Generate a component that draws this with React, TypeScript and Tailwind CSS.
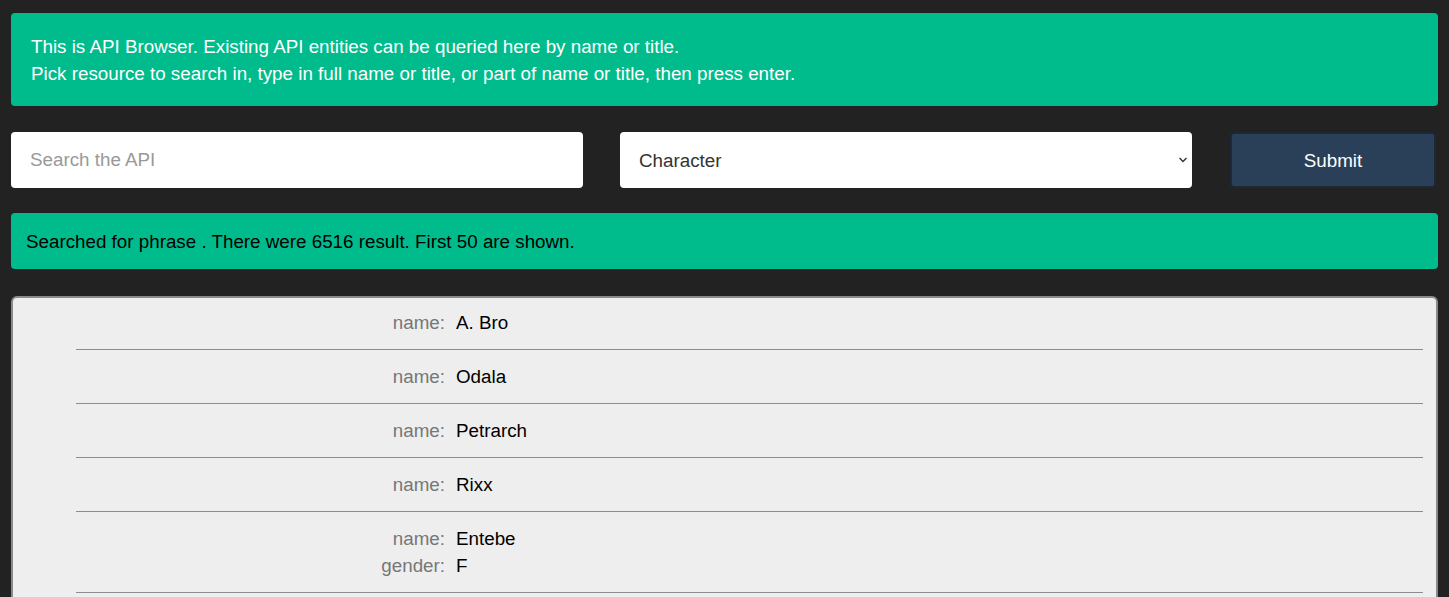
import { useState } from "react";

interface Entity {
  name: string;
  gender?: string;
}

const RESULTS: Entity[] = [
  { name: "A. Bro" },
  { name: "Odala" },
  { name: "Petrarch" },
  { name: "Rixx" },
  { name: "Entebe", gender: "F" },
  { name: "Jaro Essa" },
];

const font = { fontFamily: '"Liberation Sans", Arial, sans-serif' };

export default function App() {
  const [query, setQuery] = useState("");
  const [resource, setResource] = useState("character");

  return (
    <div className="min-h-screen bg-[#222222] px-[11px] pt-[13px] text-[18.8px] leading-[27px]" style={font}>
      {/* Intro */}
      <div className="rounded-[4px] bg-[#00bc8c] px-[20px] pt-[20px] pb-[19px] text-white">
        <div>This is API Browser. Existing API entities can be queried here by name or title.</div>
        <div>Pick resource to search in, type in full name or title, or part of name or title, then press enter.</div>
      </div>

      {/* Search form */}
      <form className="mt-[26px] flex items-center gap-[37px]" onSubmit={(e) => e.preventDefault()}>
        <input
          value={query}
          onChange={(e) => setQuery(e.target.value)}
          placeholder="Search the API"
          className="h-[56px] w-[572px] rounded-[4px] bg-white px-[19px] text-[#222] outline-none placeholder:text-[#999]"
        />
        <div className="relative h-[56px] w-[572px]">
          <select
            value={resource}
            onChange={(e) => setResource(e.target.value)}
            className="h-full w-full appearance-none rounded-[4px] bg-white px-[19px] text-[#333] outline-none"
          >
            <option value="character">Character</option>
            <option value="episode">Episode</option>
            <option value="location">Location</option>
          </select>
          <svg
            className="pointer-events-none absolute right-[4px] top-[24px]"
            width="10"
            height="8"
            viewBox="0 0 10 8"
          >
            <path d="M1.5 2 L5 5.5 L8.5 2" fill="none" stroke="#333" strokeWidth="1.4" />
          </svg>
        </div>
        <button
          type="submit"
          className="ml-[1px] h-[56px] w-[206px] rounded-[4px] border-2 border-[#1b2838] bg-[#2a4058] text-white"
        >
          Submit
        </button>
      </form>

      {/* Result summary */}
      <div className="mt-[25px] rounded-[4px] bg-[#00bc8c] px-[15px] pt-[15px] pb-[14px] text-black">
        Searched for phrase . There were 6516 result. First 50 are shown.
      </div>

      {/* Results list */}
      <div className="mt-[27px] rounded-[6px] border-2 border-[#8a8a8a] bg-[#eeeeee] pl-[63px] pr-[13px]">
        {RESULTS.map((r, i) => (
          <div
            key={i}
            className={`border-b border-[#8c8c8c] pb-[13px] ${i === 0 ? "pt-[11px]" : "pt-[13px]"}`}
          >
            <div className="grid grid-cols-[369px_1fr] gap-x-[11px]">
              <div className="text-right text-[#777]">name:</div>
              <div className="text-black">{r.name}</div>
              {r.gender && (
                <>
                  <div className="text-right text-[#777]">gender:</div>
                  <div className="text-black">{r.gender}</div>
                </>
              )}
            </div>
          </div>
        ))}
      </div>
    </div>
  );
}
